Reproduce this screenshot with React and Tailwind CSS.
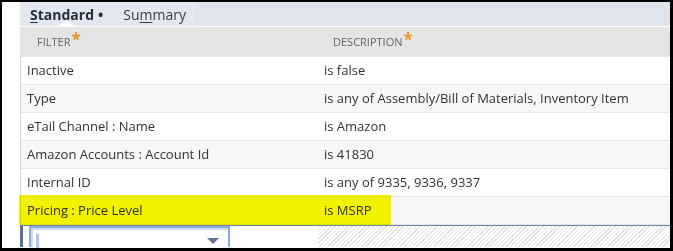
import React from "react";

const rows = [
  { filter: "Inactive", desc: "is false" },
  { filter: "Type", desc: "is any of Assembly/Bill of Materials, Inventory Item" },
  { filter: "eTail Channel : Name", desc: "is Amazon" },
  { filter: "Amazon Accounts : Account Id", desc: "is 41830" },
  { filter: "Internal ID", desc: "is any of 9335, 9336, 9337" },
  { filter: "Pricing : Price Level", desc: "is MSRP", highlight: true },
];

const Star = () => (
  <span className="ml-[1px] text-[17px] font-bold leading-none text-[#e5972a] relative -top-[3px]">*</span>
);

const App = () => {
  return (
    <div
      className="w-[673px] h-[251px] overflow-hidden bg-white border-black border-l-2 border-t-2 border-r-[3px] border-b-[3px] pl-[18px]"
      style={{ fontFamily: '"Open Sans", "Liberation Sans", sans-serif' }}
    >
      {/* tabs */}
      <div className="flex h-[25px] bg-[#dfe4ed] border-b border-white">
        <div className="flex items-center h-full w-[175px] bg-[#e3e8f0] pl-[10px]">
          <div className="relative flex items-center h-full">
            <span className="text-[14px] font-bold text-[#262e3c]">
              <span className="underline underline-offset-2">S</span>tandard
            </span>
            <span className="ml-[4px] text-[14px] font-bold text-[#262e3c]">•</span>
            <span className="absolute left-[27px] bottom-0 w-0 h-0 border-l-[9px] border-r-[9px] border-b-[5px] border-l-transparent border-r-transparent border-b-white" />
          </div>
          <span className="ml-[20px] text-[14px] text-[#3a404a]">
            Su<span className="underline underline-offset-2">m</span>mary
          </span>
        </div>
      </div>

      {/* header */}
      <div className="flex h-[30px] items-center bg-[#e4e4e4] text-[11px] text-[#666] uppercase">
        <div className="w-[296px] pl-[17px] flex items-center">
          Filter
          <Star />
        </div>
        <div className="pl-[17px] flex items-center">
          Description
          <Star />
        </div>
      </div>

      {/* rows */}
      <div className="border-l border-[#d8d8d8]">
        {rows.map((r, i) => (
          <div
            key={r.filter}
            className={`relative flex items-center h-[28px] border-b border-[#e6e6e6] text-[13px] text-[#333] ${
              i % 2 === 1 ? "bg-[#f7f7f7]" : "bg-white"
            }`}
          >
            <div className="w-[296px] pl-[6px]">{r.filter}</div>
            <div className="pl-[7px]">{r.desc}</div>
            {r.highlight && (
              <div className="absolute -left-[2px] -top-[2px] w-[372px] h-[30px] bg-[#fafa00] mix-blend-multiply" />
            )}
          </div>
        ))}
      </div>

      {/* new filter row */}
      <div className="flex h-[22px] border-t border-[#6e84a8]">
        <div className="w-[3px] bg-[#5d7292]" />
        <div className="w-[6px] bg-white" />
        <div className="relative w-[201px] border-2 border-b-0 border-[#86ace0] bg-white">
          <div className="absolute inset-0 border-l-2 border-t-2 border-[#c8dcf5]" />
          <div className="absolute left-[5px] top-[6px] w-[3px] h-[14px] bg-[#a9c9f2]" />
          <div className="absolute right-[9px] top-[10px] w-0 h-0 border-l-[6px] border-r-[6px] border-t-[6px] border-l-transparent border-r-transparent border-t-[#5b7494]" />
        </div>
        <div className="w-[88px] bg-white" />
        <div className="flex-1 bg-[repeating-linear-gradient(135deg,#e2e2e2_0px,#e2e2e2_1px,#ffffff_1px,#ffffff_3px)]" />
      </div>
    </div>
  );
};

export default App;
